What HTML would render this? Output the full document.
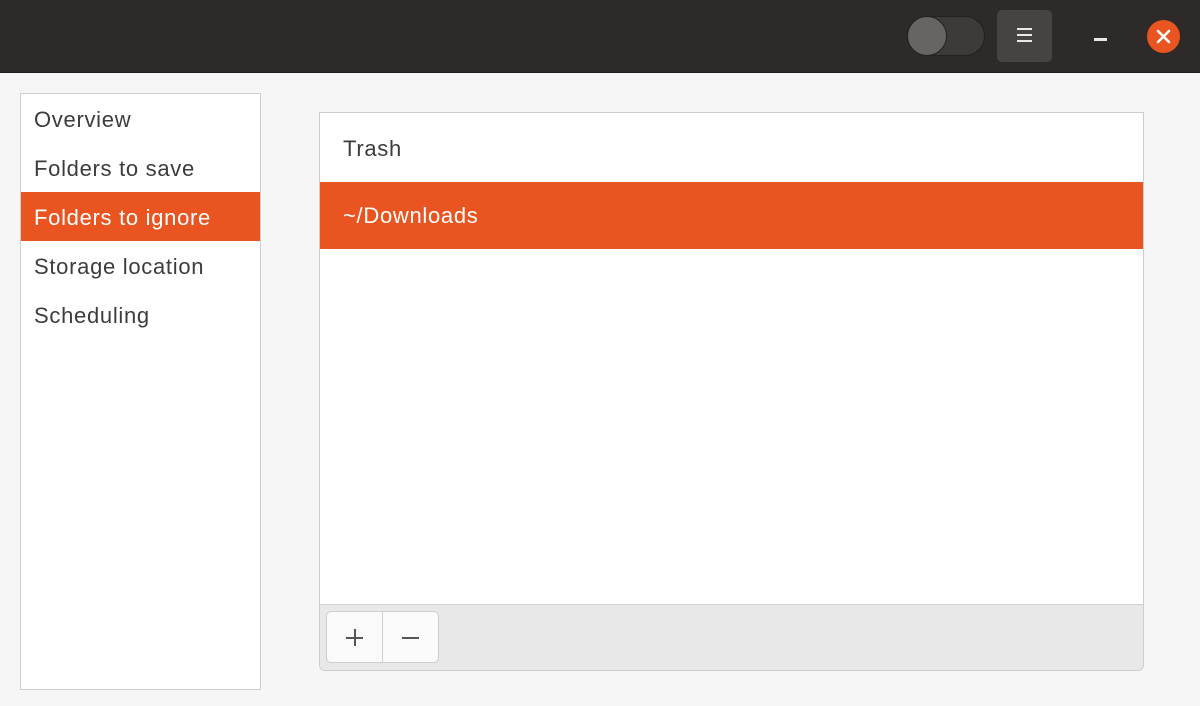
<!DOCTYPE html>
<html><head><style>
*{margin:0;padding:0;box-sizing:border-box}
body{width:1200px;height:706px;background:#f6f6f6;font-family:"Liberation Sans",sans-serif;position:relative;overflow:hidden}
.hdr{position:absolute;left:0;top:0;width:1200px;height:73px;background:#2d2a29;border-bottom:1px solid #1e1c1b}
.abs{position:absolute}
.side{left:20px;top:93px;width:241px;height:597px;background:#fff;border:1px solid #cfcfcf}
.side div{height:49px;line-height:51px;padding-left:13px;font-size:22px;letter-spacing:0.7px;color:#3c3c3c}
.side .sel{background:#e95420;color:#fff}
.main{left:319px;top:112px;width:825px;height:559px;background:#fff;border:1px solid #cdcdcd;border-radius:0 0 6px 6px;overflow:hidden}
.row{height:69px;line-height:71px;padding-left:23px;font-size:22px;letter-spacing:0.7px;color:#3c3c3c}
.row.sel{height:67px;line-height:68px;background:#e95420;color:#fff}
.tb{position:absolute;left:0;bottom:0;width:100%;height:66px;background:#e8e8e8;border-top:1px solid #d0d0d0}
.btns{position:absolute;left:6px;top:6px;width:113px;height:52px;background:#fafafa;border:1px solid #cfcfcf;border-radius:5px}
</style></head><body>
<div class="hdr">
 <div class="abs" style="left:907px;top:16px;width:78px;height:40px;border-radius:20px;background:#3d3a39;border:1px solid #222"></div>
 <div class="abs" style="left:907px;top:16px;width:40px;height:40px;border-radius:20px;background:#676463;border:1px solid #222"></div>
 <div class="abs" style="left:997px;top:10px;width:55px;height:52px;border-radius:5px;background:#464342"></div>
 <div class="abs" style="left:1017px;top:28px;width:15px;height:2px;background:#e8e8e8"></div>
 <div class="abs" style="left:1017px;top:34px;width:15px;height:2px;background:#e8e8e8"></div>
 <div class="abs" style="left:1017px;top:40px;width:15px;height:2px;background:#e8e8e8"></div>
 <div class="abs" style="left:1094px;top:38px;width:13px;height:3px;background:#e8e8e8"></div>
 <div class="abs" style="left:1147px;top:20px;width:33px;height:33px;border-radius:50%;background:#e95420"></div>
 <svg class="abs" style="left:1147px;top:20px" width="33" height="33"><path d="M11 11L22 22M22 11L11 22" stroke="#fff" stroke-width="2.6" stroke-linecap="round"/></svg>
</div>
<div class="abs side">
 <div>Overview</div><div>Folders to save</div><div class="sel">Folders to ignore</div><div>Storage location</div><div>Scheduling</div>
</div>
<div class="abs main">
 <div class="row">Trash</div>
 <div class="row sel">~/Downloads</div>
 <div class="tb"><div class="btns">
  <div class="abs" style="left:55px;top:0;width:1px;height:50px;background:#cfcfcf"></div>
  <div class="abs" style="left:19px;top:25px;width:17px;height:1.5px;background:#555"></div>
  <div class="abs" style="left:27px;top:17px;width:1.5px;height:17px;background:#555"></div>
  <div class="abs" style="left:75px;top:25px;width:17px;height:1.5px;background:#555"></div>
 </div></div>
</div>
</body></html>
